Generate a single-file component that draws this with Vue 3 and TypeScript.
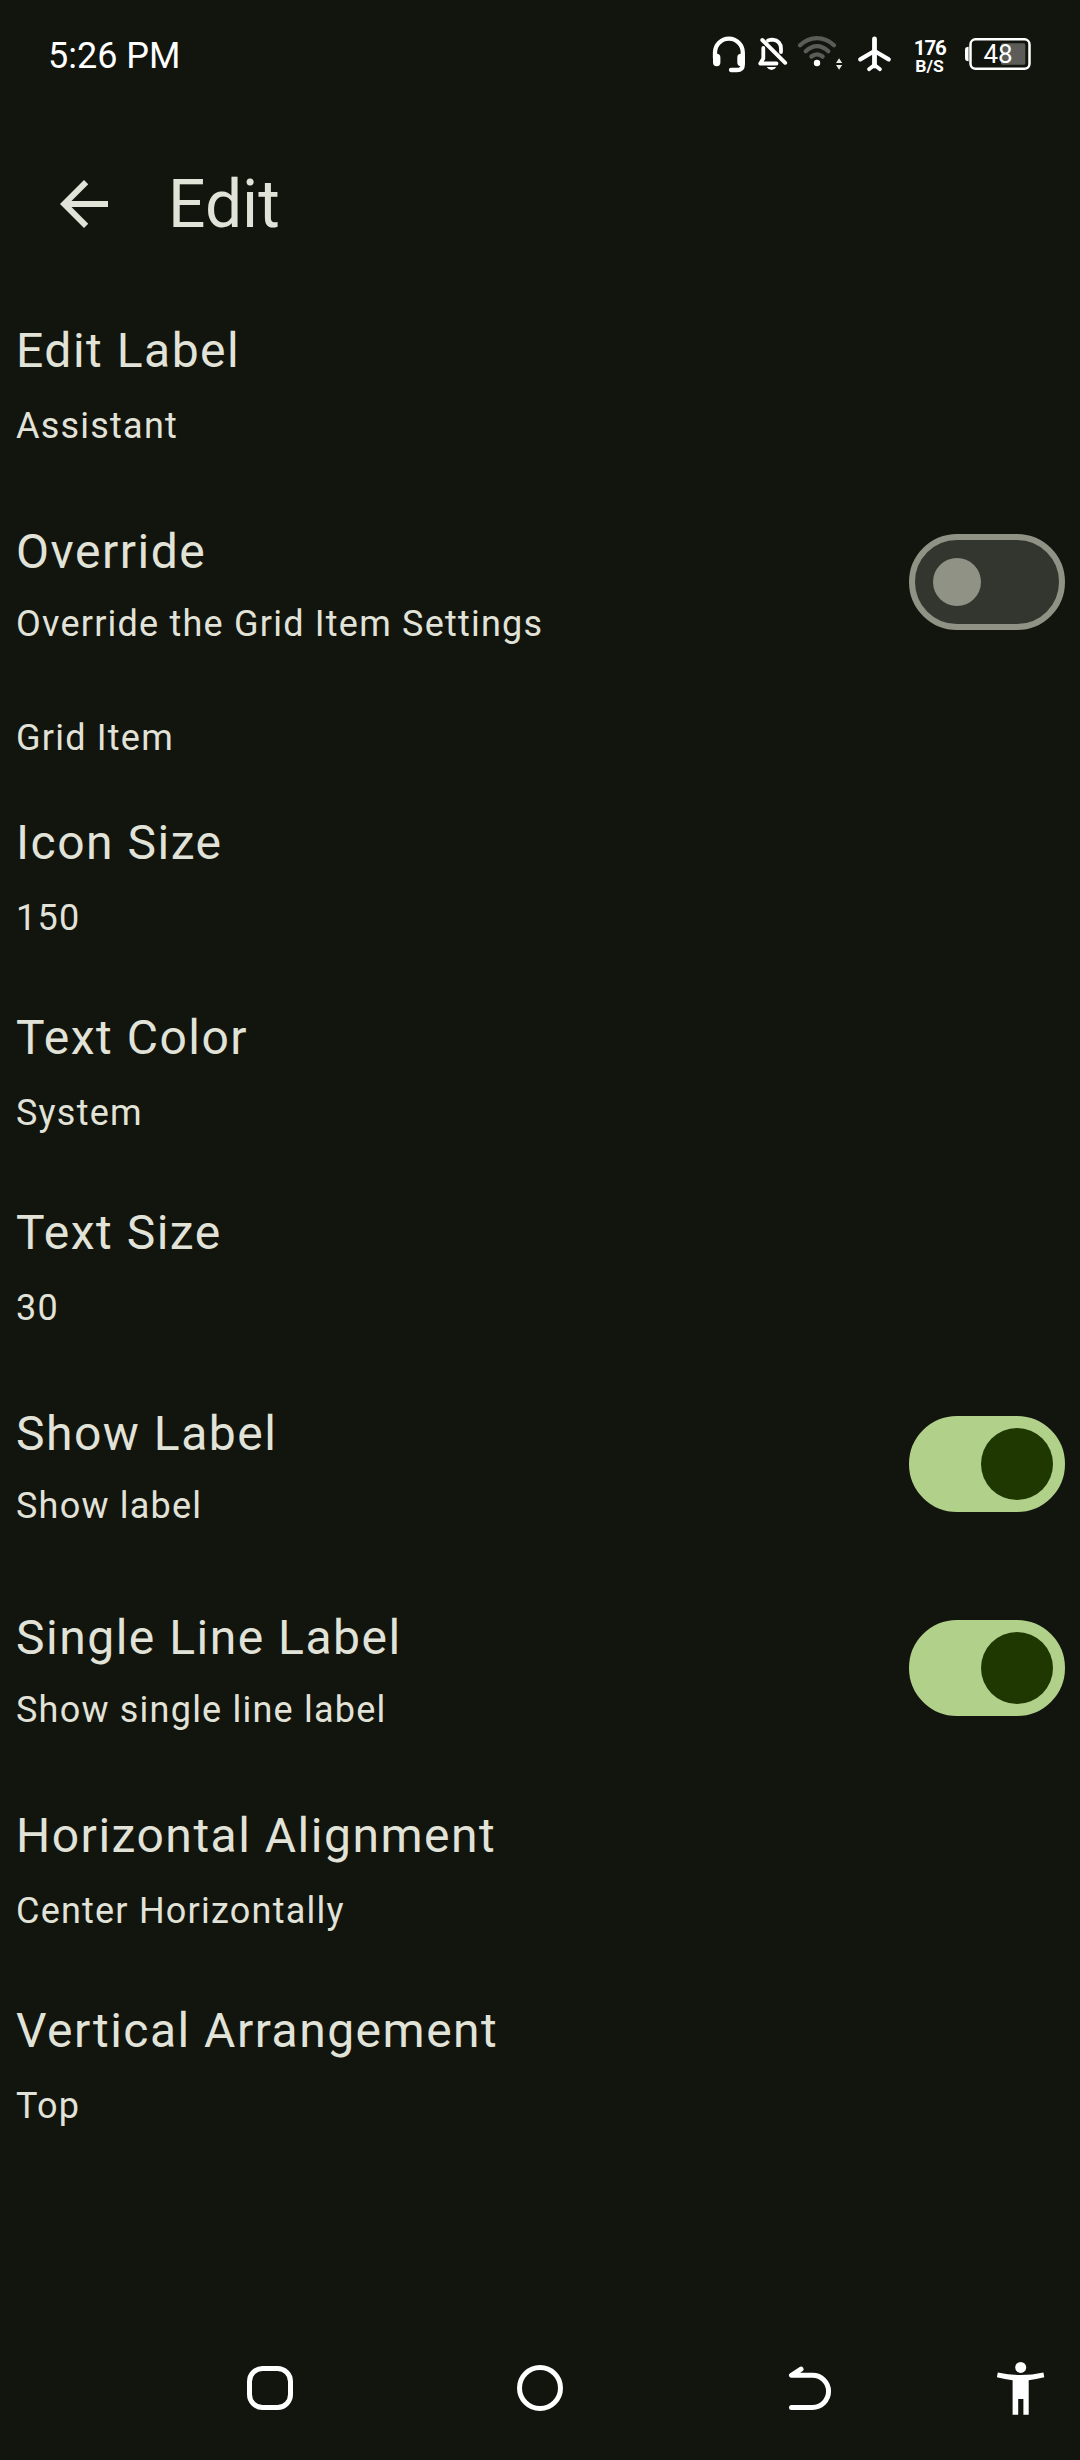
<script setup lang="ts">
import { ref } from 'vue'

interface Row {
  title: string
  subtitle: string
}

interface ToggleRow extends Row {
  on: boolean
}

const labelRow: Row = { title: 'Edit Label', subtitle: 'Assistant' }

const override = ref<ToggleRow>({
  title: 'Override',
  subtitle: 'Override the Grid Item Settings',
  on: false,
})

const gridRows: Row[] = [
  { title: 'Icon Size', subtitle: '150' },
  { title: 'Text Color', subtitle: 'System' },
  { title: 'Text Size', subtitle: '30' },
]

const toggles = ref<ToggleRow[]>([
  { title: 'Show Label', subtitle: 'Show label', on: true },
  { title: 'Single Line Label', subtitle: 'Show single line label', on: true },
])

const layoutRows: Row[] = [
  { title: 'Horizontal Alignment', subtitle: 'Center Horizontally' },
  { title: 'Vertical Arrangement', subtitle: 'Top' },
]
</script>

<template>
  <div class="screen">
    <div class="status">
      <span class="clock">5:26 PM</span>
      <div class="indicators">
        <!-- headset -->
        <svg width="40" height="50" viewBox="710 30 40 50" fill="none" stroke="#fff" stroke-linecap="round">
          <path d="M715 58V52.500a13.900 13.900 0 0 1 27.800 0V64.500Q742.800 70 737 70H731" stroke-width="4.300" />
          <path d="M716.700 57.500V62.500M741 57.500V62.500" stroke-width="7.400" />
        </svg>
        <!-- muted bell -->
        <svg width="40" height="50" viewBox="750 30 40 50" fill="none" stroke="#fff" stroke-linecap="round" stroke-linejoin="round">
          <path d="M763.300 48V58.500L760.300 63.500H776.500" stroke-width="3.800" />
          <path d="M768 40.500Q770 39.600 772.500 39.600Q781 40.500 781 49V52" stroke-width="3.800" />
          <path d="M762.300 40L785.200 62.800" stroke-width="3.900" />
          <path d="M766.700 67H776.300Q774.500 70 771.500 70Q768.500 70 766.700 67Z" fill="#fff" stroke="none" />
        </svg>
        <!-- wifi with data arrows -->
        <svg width="60" height="50" viewBox="790 30 60 50" fill="none" stroke-linecap="round">
          <g stroke="#5b5c58" stroke-width="4.300">
            <path d="M800 45.300Q807.500 38.200 817 38.200T834 45.300" />
            <path d="M805.700 51.300Q811 46.200 817 46.200T828.300 51.300" />
            <path d="M811.400 56.500Q814 54.300 817 54.300T822.600 56.500" />
          </g>
          <circle cx="817" cy="63" r="3.200" fill="#fff" />
          <path d="M836 63L839.100 58.200L842.200 63ZM836 65L839.100 69.800L842.200 65Z" fill="#e8e8e8" />
        </svg>
        <!-- airplane -->
        <svg width="50" height="50" viewBox="850 30 50 50" fill="none" stroke="#fff" stroke-linecap="round" stroke-linejoin="round">
          <path d="M874.500 39V66" stroke-width="4.800" />
          <path d="M874.500 51L860.300 59.300M874.500 51L888.700 59.300" stroke-width="4.300" />
          <path d="M874.500 65L869 69.200M874.500 65L880 69.200" stroke-width="3.800" />
        </svg>
        <!-- network speed -->
        <svg width="60" height="50" viewBox="900 30 60 50" class="speed">
          <text x="930.300" y="55" font-size="20.500" text-anchor="middle" textLength="33">176</text>
          <text x="929.500" y="72" font-size="16.500" text-anchor="middle" textLength="28.500" lengthAdjust="spacingAndGlyphs">B/S</text>
        </svg>
        <!-- battery -->
        <svg width="80" height="50" viewBox="960 30 80 50" class="battery">
          <path d="M968.600 46.700Q965 46.700 965 50V58Q965 61.300 968.600 61.300Z" fill="#fff" />
          <rect x="970.500" y="39.300" width="59" height="29.500" rx="5" fill="none" stroke="#fff" stroke-width="2.500" />
          <rect x="1001" y="43.300" width="24.300" height="21.400" rx="1.500" fill="#5c5d59" />
          <text x="998" y="63" font-size="26" text-anchor="middle" fill="#fff">48</text>
        </svg>
      </div>
    </div>

    <header class="appbar">
      <svg class="back" width="72" height="72" viewBox="0 0 24 24" fill="#e2e3d8">
        <path d="M20 11H7.830l5.590-5.590L12 4l-8 8 8 8 1.410-1.410L7.830 13H20v-2z" />
      </svg>
      <h1>Edit</h1>
    </header>

    <main>
      <div class="item">
        <div class="title">{{ labelRow.title }}</div>
        <div class="sub">{{ labelRow.subtitle }}</div>
      </div>

      <div class="item toggle">
        <div class="texts">
          <div class="title">{{ override.title }}</div>
          <div class="sub">{{ override.subtitle }}</div>
        </div>
        <div class="switch" :class="{ on: override.on }" @click="override.on = !override.on">
          <span class="thumb"></span>
        </div>
      </div>

      <div class="section sub">Grid Item</div>

      <div v-for="row in gridRows" :key="row.title" class="item">
        <div class="title">{{ row.title }}</div>
        <div class="sub">{{ row.subtitle }}</div>
      </div>

      <div v-for="row in toggles" :key="row.title" class="item toggle">
        <div class="texts">
          <div class="title">{{ row.title }}</div>
          <div class="sub">{{ row.subtitle }}</div>
        </div>
        <div class="switch" :class="{ on: row.on }" @click="row.on = !row.on">
          <span class="thumb"></span>
        </div>
      </div>

      <div v-for="row in layoutRows" :key="row.title" class="item">
        <div class="title">{{ row.title }}</div>
        <div class="sub">{{ row.subtitle }}</div>
      </div>
    </main>

    <nav class="navbar">
      <svg width="60" height="60" viewBox="0 0 60 60" fill="none" stroke="#fff" stroke-width="5">
        <rect x="9.500" y="10.500" width="41" height="39" rx="13" />
      </svg>
      <svg width="60" height="60" viewBox="0 0 60 60" fill="none" stroke="#fff" stroke-width="5">
        <circle cx="30" cy="30" r="20.500" />
      </svg>
      <svg width="60" height="60" viewBox="780 2358 60 60" fill="none" stroke="#fff" stroke-width="5" stroke-linecap="round" stroke-linejoin="round">
        <path d="M801 2369.200L791.500 2375.300H812.500A16.050 16.050 0 0 1 812.500 2407.400H791.500" />
      </svg>
      <svg class="a11y" width="60" height="60" viewBox="990 2358 60 60" fill="#fff">
        <circle cx="1020.700" cy="2367.400" r="5.500" />
        <path d="M997.800 2372.500Q1020.700 2377.600 1043.400 2372.500L1044.300 2377.300Q1036 2379.500 1028.700 2380.200V2414.800H1023.400V2399H1018.200V2414.800H1012.600V2380.200Q1005 2379.500 996.900 2377.300Z" />
      </svg>
    </nav>
  </div>
</template>

<style>
body {
  margin: 0;
  background: #12140e;
}
</style>

<style scoped>
.screen {
  width: 1080px;
  height: 2460px;
  display: flex;
  flex-direction: column;
  background: #12140e;
  color: #e2e3d8;
  font-family: Roboto, 'Liberation Sans', sans-serif;
  overflow: hidden;
}

.status {
  height: 108px;
  box-sizing: border-box;
  padding: 30px 40px 0 48px;
  display: flex;
  justify-content: space-between;
  align-items: flex-start;
  color: #fff;
}

.clock {
  font-size: 36px;
  line-height: 52px;
}

.indicators {
  display: flex;
}

.indicators svg {
  display: block;
}

.speed {
  fill: #fff;
  font-weight: 700;
}

.appbar {
  height: 177px;
  box-sizing: border-box;
  padding: 54px 48px 0;
  display: flex;
  align-items: flex-start;
  gap: 48px;
}

.back {
  margin-top: 6px;
}

h1 {
  margin: 1px 0 0;
  font-size: 66px;
  line-height: 84px;
  font-weight: 400;
}

main {
  flex: 1;
}

.item {
  padding: 30px 15px 30px 16px;
  display: flex;
  flex-direction: column;
  gap: 15px;
}

.title {
  font-size: 48px;
  line-height: 72px;
  letter-spacing: 1.5px;
}

.sub {
  font-size: 36px;
  line-height: 48px;
  letter-spacing: 1.22px;
}

.item.toggle {
  padding: 36px 15px 36px 16px;
  flex-direction: row;
  justify-content: space-between;
  align-items: center;
}

.texts {
  display: flex;
  flex-direction: column;
  gap: 12px;
}

.section {
  padding: 30px 15px 15px 16px;
}

.switch {
  width: 156px;
  height: 96px;
  box-sizing: border-box;
  border: 6px solid #8f9285;
  border-radius: 48px;
  background: #33362e;
  padding: 0 18px;
  display: flex;
  align-items: center;
}

.thumb {
  width: 48px;
  height: 48px;
  border-radius: 50%;
  background: #8f9285;
}

.switch.on {
  border-color: #b1d18a;
  background: #b1d18a;
  padding: 0 6px;
  justify-content: flex-end;
}

.switch.on .thumb {
  width: 72px;
  height: 72px;
  background: #1f3701;
}

.navbar {
  height: 102px;
  padding: 0 30px 0 240px;
  display: flex;
}

.navbar svg {
  display: block;
  margin-right: 210px;
}

.navbar svg:nth-child(3) {
  margin-right: 150px;
}

.navbar .a11y {
  margin-right: 0;
}
</style>
